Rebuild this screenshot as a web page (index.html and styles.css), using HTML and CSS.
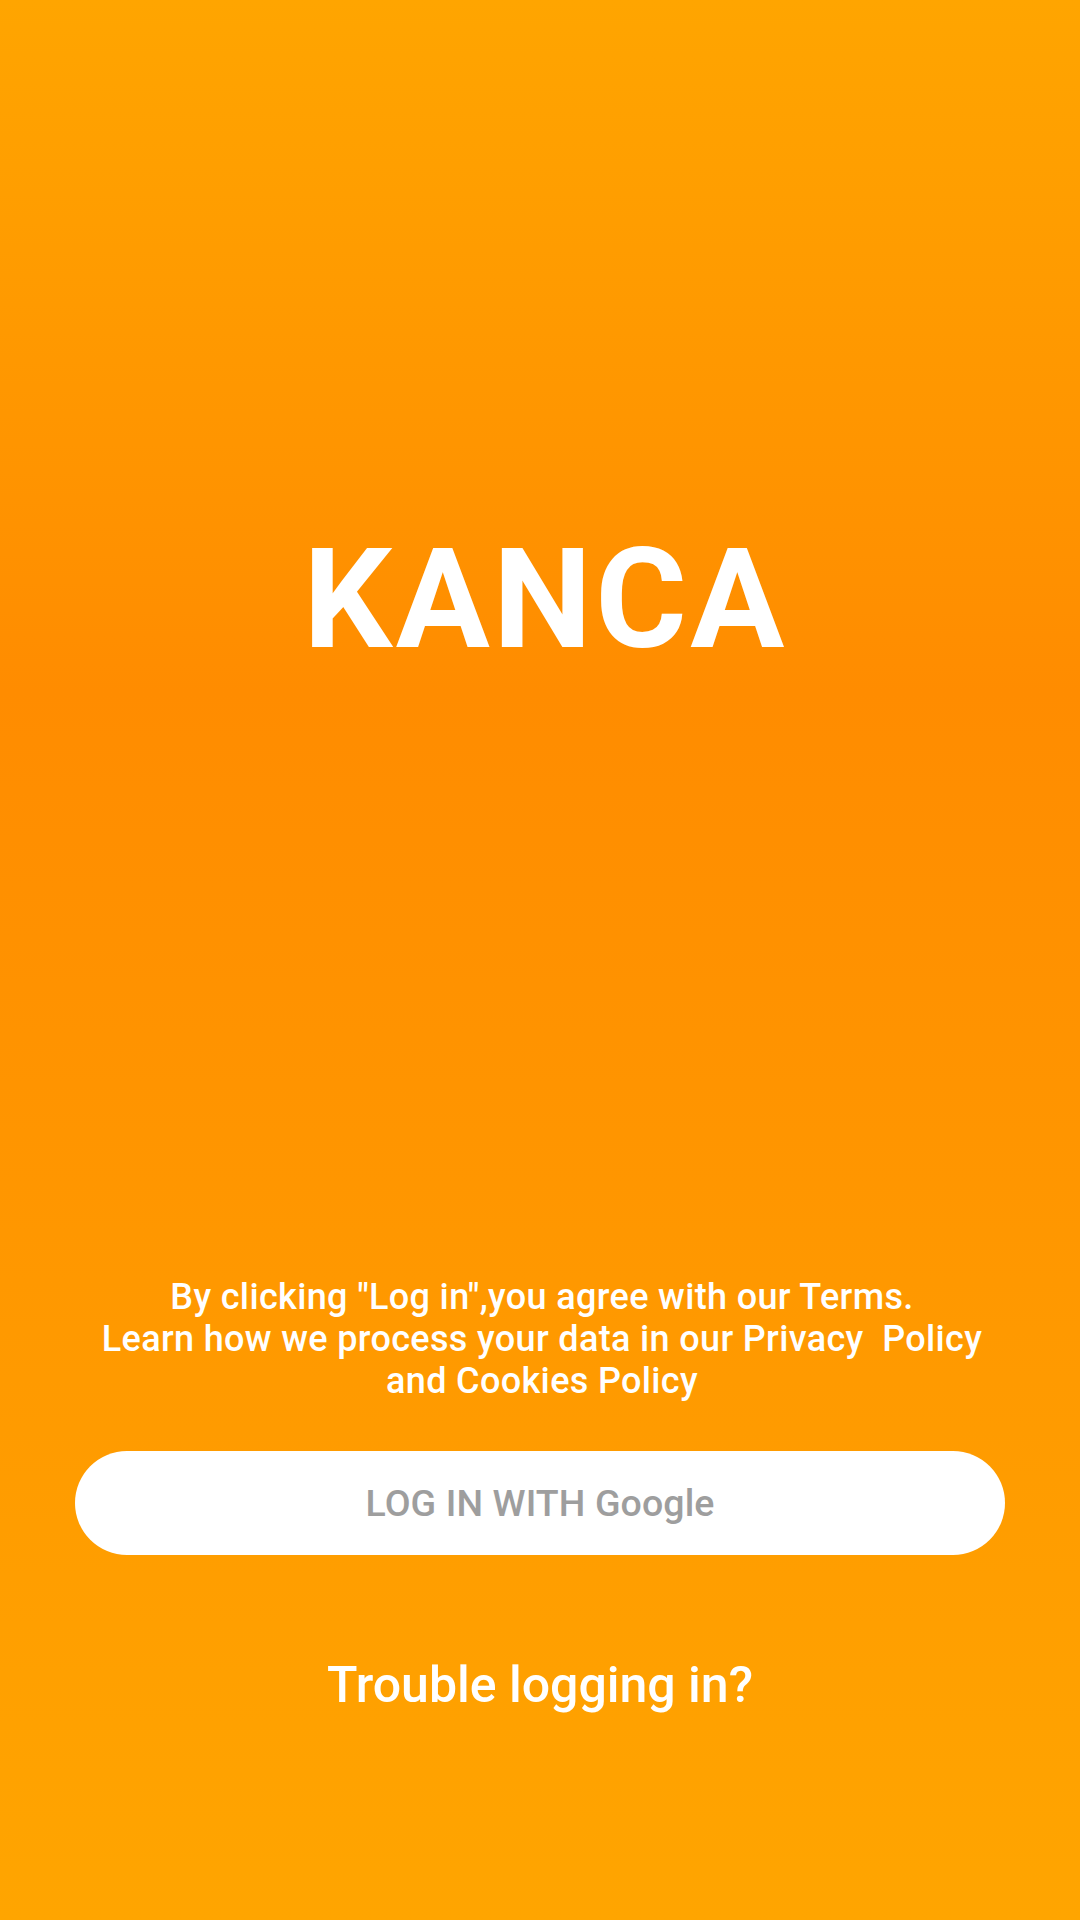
FILE: index.html
```html
<!DOCTYPE html>
<html lang="en">
<head>
<meta charset="utf-8">
<title>KANCA</title>
<link rel="stylesheet" href="styles.css">
</head>
<body>
<main class="screen">
  <h1 class="logo">KANCA</h1>
  <p class="terms">By clicking "Log in",you agree with our Terms.<br>Learn how we process your data in our Privacy&nbsp; Policy<br>and Cookies Policy</p>
  <button class="login-btn" type="button">LOG IN WITH Google</button>
  <a class="trouble" href="#">Trouble logging in?</a>
</main>
</body>
</html>
```
FILE: styles.css
```css
html, body {
  margin: 0;
  padding: 0;
}
body {
  width: 1080px;
  height: 1920px;
  overflow: hidden;
  font-family: Roboto, "Noto Sans", sans-serif;
}
.screen {
  height: 1920px;
  display: flex;
  flex-direction: column;
  align-items: center;
  background: linear-gradient(180deg, #ffa500 0%, #ff8c00 36%, #ffa500 100%);
  color: #ffffff;
}
.logo {
  margin: 529px 0 0;
  padding-left: 11px;
  font-size: 140px;
  line-height: 140px;
  font-weight: 700;
  letter-spacing: 3.4px;
}
.terms {
  margin: 607px 0 0;
  padding-left: 4px;
  font-size: 36px;
  line-height: 42px;
  font-weight: 500;
  letter-spacing: 0.35px;
  text-align: center;
}
.login-btn {
  margin-top: 49px;
  width: 930px;
  height: 104px;
  border: none;
  border-radius: 52px;
  background: #ffffff;
  color: #9e9e9e;
  font-family: Roboto, "Noto Sans", sans-serif;
  font-size: 37.5px;
  font-weight: 500;
  letter-spacing: 0.1px;
  padding: 0;
}
.trouble {
  margin-top: 99px;
  font-size: 50px;
  line-height: 62px;
  font-weight: 500;
  color: #ffffff;
  text-decoration: none;
}
```
